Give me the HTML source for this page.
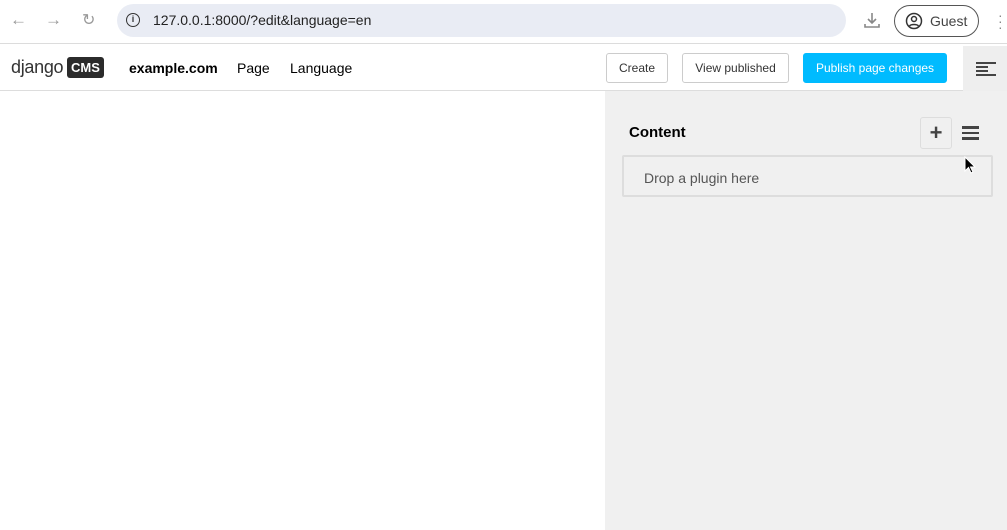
<!DOCTYPE html>
<html><head><style>
*{box-sizing:border-box;margin:0;padding:0}
body{width:1007px;height:530px;overflow:hidden;background:#fff;font-family:"Liberation Sans",sans-serif;position:relative}
.abs{position:absolute}
.btn{position:absolute;top:53px;height:30px;border:1px solid #ccc;border-radius:3px;background:#fff;font-size:12px;color:#333;display:flex;align-items:center;justify-content:center}
</style></head><body>
<div class="abs" style="left:0;top:0;width:1007px;height:44px;background:#fff;border-bottom:1px solid #dcdcdc"></div>
<div class="abs" style="left:10px;top:10px;color:#999;font-size:17px">←</div>
<div class="abs" style="left:45px;top:10px;color:#999;font-size:17px">→</div>
<div class="abs" style="left:82px;top:10px;color:#999;font-size:16px">↻</div>
<div class="abs" style="left:117px;top:4px;width:729px;height:33px;border-radius:17px;background:#e9ecf4"></div>
<div class="abs" style="left:126px;top:13px;width:14px;height:14px;border:1.5px solid #333;border-radius:50%;font-size:9px;font-weight:bold;text-align:center;line-height:11px;color:#333">i</div>
<div class="abs" style="left:153px;top:12px;font-size:14px;color:#222">127.0.0.1:8000/?edit&amp;language=en</div>
<svg class="abs" style="left:863px;top:11px" width="18" height="18" viewBox="0 0 18 18" fill="none" stroke="#888" stroke-width="1.6"><path d="M9 2v10M5 8l4 4 4-4M2 13v3h14v-3"/></svg>
<div class="abs" style="left:894px;top:5px;width:85px;height:32px;border:1px solid #555;border-radius:16px"></div>
<svg class="abs" style="left:905px;top:12px" width="18" height="18" viewBox="0 0 18 18" fill="none" stroke="#333" stroke-width="1.5"><circle cx="9" cy="9" r="7.5"/><circle cx="9" cy="7" r="2.5"/><path d="M4.5 14c1.5-2 7.5-2 9 0"/></svg>
<div class="abs" style="left:930px;top:13px;font-size:14px;color:#444">Guest</div>
<div class="abs" style="left:998px;top:12px;color:#888;font-size:14px;line-height:6px">·<br>·<br>·</div>
<div class="abs" style="left:0;top:45px;width:1007px;height:46px;background:#fff;border-bottom:1px solid #ddd"></div>
<div class="abs" style="left:11px;top:57px;font-size:18px;color:#333;letter-spacing:-0.3px">django</div>
<div class="abs" style="left:67px;top:57px;width:37px;height:21px;background:#2b2b2b;border-radius:3px;color:#fff;font-size:13px;font-weight:bold;text-align:center;line-height:21px">CMS</div>
<div class="abs" style="left:129px;top:60px;font-size:14px;font-weight:bold;color:#000">example.com</div>
<div class="abs" style="left:237px;top:60px;font-size:14px;color:#000">Page</div>
<div class="abs" style="left:290px;top:60px;font-size:14px;color:#000">Language</div>
<div class="btn" style="left:606px;width:62px">Create</div>
<div class="btn" style="left:682px;width:107px">View published</div>
<div class="btn" style="left:803px;width:144px;background:#00bbff;border-color:#00bbff;color:#fff">Publish page changes</div>
<div class="abs" style="left:963px;top:46px;width:44px;height:45px;background:#eee"></div>
<div class="abs" style="left:976px;top:62px;width:20px">
<div style="height:2px;background:#444;margin-bottom:2px"></div><div style="height:2px;width:12px;background:#444;margin-bottom:2px"></div><div style="height:2px;width:12px;background:#444;margin-bottom:2px"></div><div style="height:2px;background:#444"></div></div>
<div class="abs" style="left:605px;top:91px;width:402px;height:439px;background:#f0f0f0"></div>
<div class="abs" style="left:629px;top:124px;font-size:15px;font-weight:bold;color:#000">Content</div>
<div class="abs" style="left:920px;top:117px;width:32px;height:32px;border:1px solid #ddd;border-radius:3px;font-size:22px;font-weight:bold;color:#444;text-align:center;line-height:30px">+</div>
<div class="abs" style="left:962px;top:126px;width:17px"><div style="height:2.5px;background:#444;margin-bottom:3px"></div><div style="height:2.5px;background:#444;margin-bottom:3px"></div><div style="height:2.5px;background:#444"></div></div>
<div class="abs" style="left:622px;top:155px;width:371px;height:42px;border:2px solid #ddd;border-radius:2px;font-size:14px;color:#555;padding:13px 0 0 20px">Drop a plugin here</div>
<svg class="abs" style="left:964px;top:156px" width="12" height="18" viewBox="0 0 12 18"><path d="M1 1v14l3.5-3.5 2.5 5.5 2-1-2.5-5H11z" fill="#000" stroke="#fff" stroke-width="1"/></svg>
</body></html>
